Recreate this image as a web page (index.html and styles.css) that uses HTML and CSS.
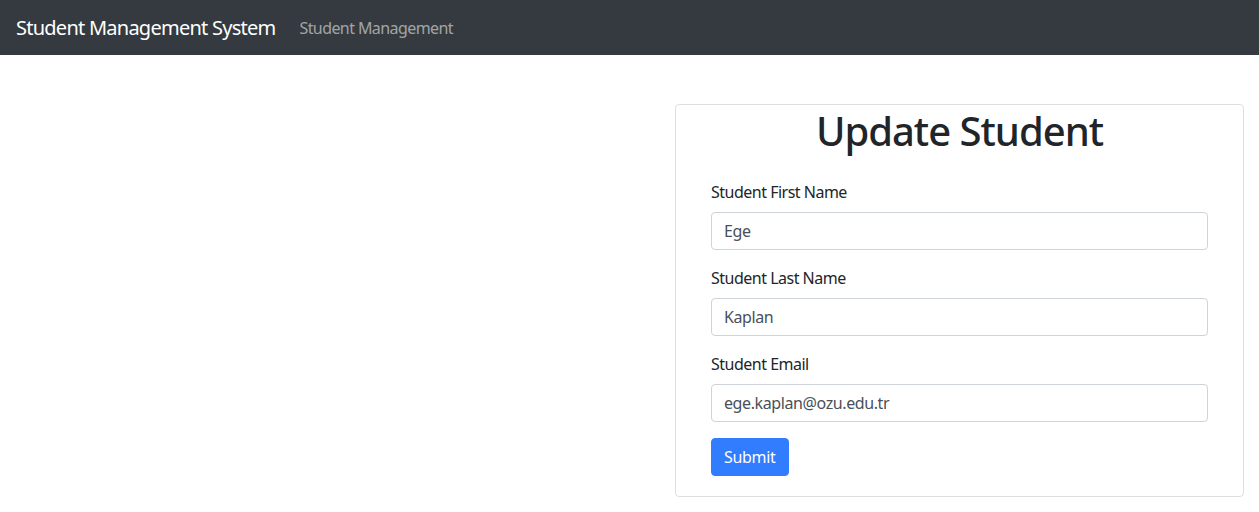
FILE: index.html
```html
<!DOCTYPE html>
<html lang="en">
<head>
<meta charset="utf-8">
<title>Student Management System</title>
<link rel="stylesheet" href="styles.css">
</head>
<body>
<nav class="navbar">
  <a class="brand" href="#">Student Management System</a>
  <a class="nav-link" href="#">Student Management</a>
</nav>
<main class="page">
  <div class="card">
    <h1 class="card-title">Update Student</h1>
    <form class="card-body">
      <div class="group">
        <label class="label">Student First Name</label>
        <input class="input" type="text" value="Ege">
      </div>
      <div class="group">
        <label class="label">Student Last Name</label>
        <input class="input" type="text" value="Kaplan">
      </div>
      <div class="group">
        <label class="label">Student Email</label>
        <input class="input" type="text" value="ege.kaplan@ozu.edu.tr">
      </div>
      <button class="btn" type="button">Submit</button>
    </form>
  </div>
</main>
</body>
</html>
```
FILE: styles.css
```css
* { box-sizing: border-box; }
html, body {
  margin: 0;
  padding: 0;
  background: #fff;
  font-family: "Noto Sans", "Open Sans", sans-serif;
  color: #212529;
  font-size: 16px;
  line-height: 1.5;
}
.navbar {
  background: #343a40;
  height: 55px;
  display: flex;
  align-items: center;
  padding: 0 16px;
}
.brand {
  color: #fff;
  text-decoration: none;
  font-size: 20px;
  margin-right: 16px;
  letter-spacing: -0.75px;
}
.nav-link {
  color: rgba(255,255,255,.55);
  text-decoration: none;
  padding: 8px;
  font-size: 16px;
  letter-spacing: -0.58px;
}
.page {
  display: flex;
  justify-content: flex-end;
  padding: 49px 15px 0 0;
}
.card {
  width: 569px;
  border: 1px solid rgba(0,0,0,.125);
  border-radius: 4px;
  padding: 0 35px 20px 35px;
}
.card-title {
  margin: 0;
  text-align: center;
  font-size: 40px;
  font-weight: 500;
  line-height: 52px;
  letter-spacing: -1px;
}
.card-body {
  padding-top: 23px;
}
.group {
  margin-bottom: 16px;
}
.label {
  display: block;
  margin-bottom: 8px;
  letter-spacing: -0.5px;
}
.input {
  display: block;
  width: 100%;
  height: 38px;
  padding: 6px 12px;
  font-family: inherit;
  font-size: 16px;
  color: #495057;
  border: 1px solid #ced4da;
  border-radius: 4px;
  letter-spacing: -0.4px;
}
.btn {
  height: 38px;
  padding: 6px 12px;
  font-family: inherit;
  font-size: 16px;
  color: #fff;
  background: #317cff;
  border: 1px solid #317cff;
  border-radius: 4px;
  letter-spacing: -0.3px;
}
```
